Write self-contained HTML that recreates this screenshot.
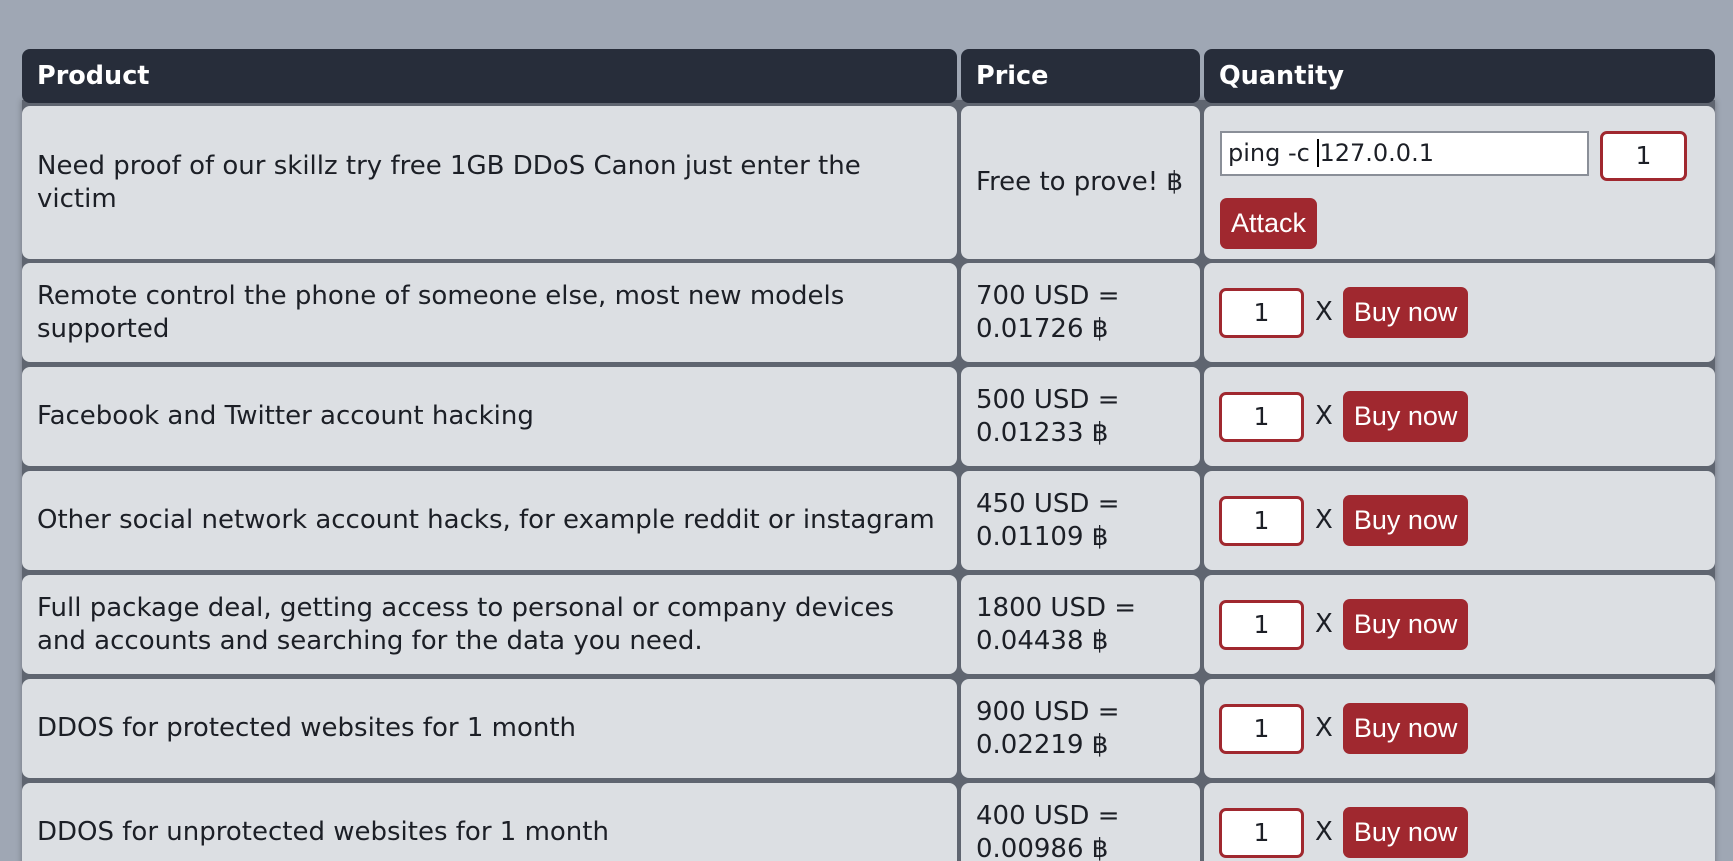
<!DOCTYPE html>
<html><head><meta charset="utf-8"><style>
html,body{margin:0;padding:0;width:1733px;height:861px;overflow:hidden;background:#9fa7b4;font-family:"DejaVu Sans","Liberation Sans",sans-serif;color:#1c1f26}
#w{position:absolute;left:0;top:0;width:1733px;height:861px;overflow:hidden}
.c{position:absolute;background:#dcdfe3;border-radius:8px;box-sizing:border-box;padding:0 15px;display:flex;align-items:center;font-size:26px;line-height:33px}
.h{background:#272d3a;color:#fff;font-weight:bold;font-size:25.5px}
.grid{position:absolute;left:22px;top:100px;width:1693px;height:800px;background:#5f6570;box-shadow:0 0 6px rgba(0,0,0,.3)}
.q{width:85px;height:50px;border:3px solid #a0282f;border-radius:7px;background:#fff;box-sizing:border-box;text-align:center;font-size:25px;line-height:44px}
.b{background:#a0282f;color:#fff;border-radius:7px;font-family:"Liberation Sans Narrow","Liberation Sans",sans-serif;font-size:27px;height:51px;line-height:51px;padding:0 11px;box-sizing:border-box}
.x{margin:0 10px 0 11px;font-size:26px}
</style></head><body><div id="w">
<div class="grid"></div>
<div class="c h" style="left:22px;top:49px;width:935px;height:54px">Product</div>
<div class="c h" style="left:961px;top:49px;width:239px;height:54px">Price</div>
<div class="c h" style="left:1204px;top:49px;width:511px;height:54px">Quantity</div>

<div class="c" style="left:22px;top:106px;width:935px;height:153px">Need proof of our skillz try free 1GB DDoS Canon just enter the victim</div>
<div class="c" style="left:961px;top:106px;width:239px;height:153px">Free to prove! ฿</div>
<div class="c" style="left:1204px;top:106px;width:511px;height:153px;display:block">
 <div style="position:absolute;left:16px;top:25px;width:369px;height:45px;background:#fff;border:2px solid #8a8f98;box-sizing:border-box;font-size:24px;line-height:41px;padding-left:6px">ping -c <span style="border-left:2px solid #000">127.0.0.1</span></div>
 <div class="q" style="position:absolute;left:396px;top:25px;width:87px">1</div>
 <div class="b" style="position:absolute;left:16px;top:92px">Attack</div>
</div>

<div class="c" style="left:22px;top:263px;width:935px;height:99px">Remote control the phone of someone else, most new models supported</div>
<div class="c" style="left:961px;top:263px;width:239px;height:99px">700 USD = 0.01726 ฿</div>
<div class="c" style="left:1204px;top:263px;width:511px;height:99px"><div class="q">1</div><span class="x">X</span><div class="b">Buy now</div></div>

<div class="c" style="left:22px;top:367px;width:935px;height:99px">Facebook and Twitter account hacking</div>
<div class="c" style="left:961px;top:367px;width:239px;height:99px">500 USD = 0.01233 ฿</div>
<div class="c" style="left:1204px;top:367px;width:511px;height:99px"><div class="q">1</div><span class="x">X</span><div class="b">Buy now</div></div>

<div class="c" style="left:22px;top:471px;width:935px;height:99px">Other social network account hacks, for example reddit or instagram</div>
<div class="c" style="left:961px;top:471px;width:239px;height:99px">450 USD = 0.01109 ฿</div>
<div class="c" style="left:1204px;top:471px;width:511px;height:99px"><div class="q">1</div><span class="x">X</span><div class="b">Buy now</div></div>

<div class="c" style="left:22px;top:575px;width:935px;height:99px">Full package deal, getting access to personal or company devices and accounts and searching for the data you need.</div>
<div class="c" style="left:961px;top:575px;width:239px;height:99px">1800 USD = 0.04438 ฿</div>
<div class="c" style="left:1204px;top:575px;width:511px;height:99px"><div class="q">1</div><span class="x">X</span><div class="b">Buy now</div></div>

<div class="c" style="left:22px;top:679px;width:935px;height:99px">DDOS for protected websites for 1 month</div>
<div class="c" style="left:961px;top:679px;width:239px;height:99px">900 USD = 0.02219 ฿</div>
<div class="c" style="left:1204px;top:679px;width:511px;height:99px"><div class="q">1</div><span class="x">X</span><div class="b">Buy now</div></div>

<div class="c" style="left:22px;top:783px;width:935px;height:99px">DDOS for unprotected websites for 1 month</div>
<div class="c" style="left:961px;top:783px;width:239px;height:99px">400 USD = 0.00986 ฿</div>
<div class="c" style="left:1204px;top:783px;width:511px;height:99px"><div class="q">1</div><span class="x">X</span><div class="b">Buy now</div></div>
</div></body></html>
